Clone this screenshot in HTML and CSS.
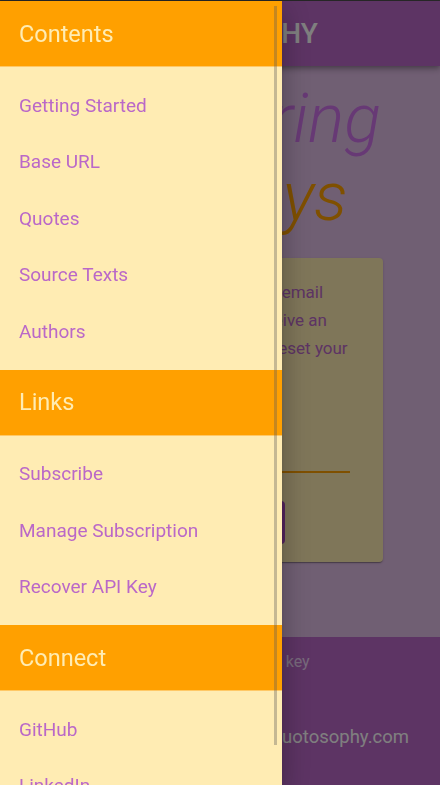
FILE: index.html
```html
<!DOCTYPE html>
<html lang="en">
<head>
<meta charset="utf-8">
<title>Quotosophy</title>
<link rel="stylesheet" href="styles.css">
</head>
<body>
<div class="page">
  <header class="appbar"><span class="brand">QUOTOSOPHY</span></header>
  <main class="content">
    <h1 class="title"><span class="t1">Recovering</span><span class="t2">API Keys</span></h1>
    <section class="card">
      <p class="card-text">Add your valid subscription email<br>address and you'll then receive an<br>email with a simple link to reset your<br>API key.</p>
      <div class="field"><input class="input" type="email" placeholder="Email"></div>
      <button class="btn" type="button">SEND RECOVERY EMAIL</button>
    </section>
  </main>
  <footer class="footer">
    <div class="foot-line">Recover your lost API key</div>
    <div class="foot-mail">contact@quotosophy.com</div>
  </footer>
</div>
<div class="scrim"></div>
<nav class="drawer">
  <div class="drawer-head">Contents</div>
  <ul class="drawer-list">
    <li><a href="#">Getting Started</a></li>
    <li><a href="#">Base URL</a></li>
    <li><a href="#">Quotes</a></li>
    <li><a href="#">Source Texts</a></li>
    <li><a href="#">Authors</a></li>
  </ul>
  <div class="drawer-head">Links</div>
  <ul class="drawer-list">
    <li><a href="#">Subscribe</a></li>
    <li><a href="#">Manage Subscription</a></li>
    <li><a href="#">Recover API Key</a></li>
  </ul>
  <div class="drawer-head">Connect</div>
  <ul class="drawer-list">
    <li><a href="#">GitHub</a></li>
    <li><a href="#">LinkedIn</a></li>
    <li><a href="#">Twitter</a></li>
  </ul>
  <div class="thumb"></div>
</nav>
</body>
</html>
```
FILE: styles.css
```css
html {
  background: #2b2b2b;
}
body {
  margin: 0;
  padding-top: 1px;
  font-family: Roboto, "Noto Sans", sans-serif;
  overflow: hidden;
}
.page {
  background: #e1bee7;
  min-height: 784px;
  display: flex;
  flex-direction: column;
}
.appbar {
  height: 65px;
  background: #ba68c8;
  display: flex;
  align-items: center;
  padding-left: 135px;
  position: relative;
  z-index: 1;
  box-shadow: 0 2px 4px -1px rgba(0,0,0,.2), 0 4px 5px 0 rgba(0,0,0,.14), 0 1px 10px 0 rgba(0,0,0,.12);
}
.brand {
  color: #ffffff;
  font-size: 28px;
  font-weight: 500;
}
.content {
  display: flex;
  flex-direction: column;
}
.title {
  margin: 14px 0 22px;
  text-align: center;
  font-size: 68px;
  line-height: 78px;
  font-weight: 300;
  font-style: italic;
}
.t1 {
  display: block;
  color: #cf72ea;
}
.t2 {
  display: block;
  color: #ffa000;
}
.card {
  margin: 0 57px;
  background: #ffecb3;
  border-radius: 4px;
  padding: 20px 16px 18px;
  box-shadow: 0 2px 1px -1px rgba(0,0,0,.2), 0 1px 1px 0 rgba(0,0,0,.14), 0 1px 3px 0 rgba(0,0,0,.12);
}
.card-text {
  margin: 0;
  font-size: 17px;
  line-height: 28px;
  color: #ba68c8;
  white-space: nowrap;
}
.field {
  margin-top: 43px;
  width: 277px;
}
.input {
  display: block;
  box-sizing: border-box;
  width: 100%;
  height: 40px;
  border: 0;
  border-bottom: 2px solid #ffa000;
  background: transparent;
  font-family: inherit;
  font-size: 16px;
  color: #ba68c8;
  outline: none;
}
.btn {
  display: block;
  margin-top: 28px;
  width: 212px;
  height: 43px;
  border: 0;
  border-radius: 4px;
  background: #ab47bc;
  color: #ffffff;
  font-family: inherit;
  font-size: 15px;
  font-weight: 500;
}
.footer {
  margin-top: 75px;
  flex: 1;
  background: #ba68c8;
  padding-top: 12px;
  display: flex;
  flex-direction: column;
}
.foot-line {
  text-align: center;
  font-size: 16px;
  line-height: 26px;
  color: #eed4f6;
}
.foot-mail {
  margin-top: 48px;
  text-align: right;
  padding-right: 31px;
  font-size: 18.5px;
  line-height: 28px;
  color: #ffffff;
}
.scrim {
  position: fixed;
  top: 1px;
  left: 0;
  right: 0;
  bottom: 0;
  background: rgba(0,0,0,.5);
  z-index: 2;
}
.drawer {
  position: fixed;
  top: 1px;
  left: 0;
  bottom: 0;
  width: 282px;
  background: #ffecb3;
  overflow: hidden;
  z-index: 3;
  box-shadow: 0 8px 10px -5px rgba(0,0,0,.2), 0 16px 24px 2px rgba(0,0,0,.14), 0 6px 30px 5px rgba(0,0,0,.12);
}
.drawer-head {
  height: 65px;
  border-bottom: 1px solid #ffc866;
  background: #ffa000;
  color: #ffecb3;
  font-size: 23.5px;
  padding-left: 19px;
  display: flex;
  align-items: center;
}
.drawer-list {
  list-style: none;
  margin: 0;
  padding: 10px 0;
}
.drawer-list a {
  display: flex;
  align-items: center;
  height: 56.5px;
  padding-left: 19px;
  color: #ba68c8;
  font-size: 19px;
  text-decoration: none;
}
.thumb {
  position: absolute;
  top: 5px;
  right: 5px;
  width: 3px;
  height: 739px;
  background: rgba(90,90,90,.35);
}
```
